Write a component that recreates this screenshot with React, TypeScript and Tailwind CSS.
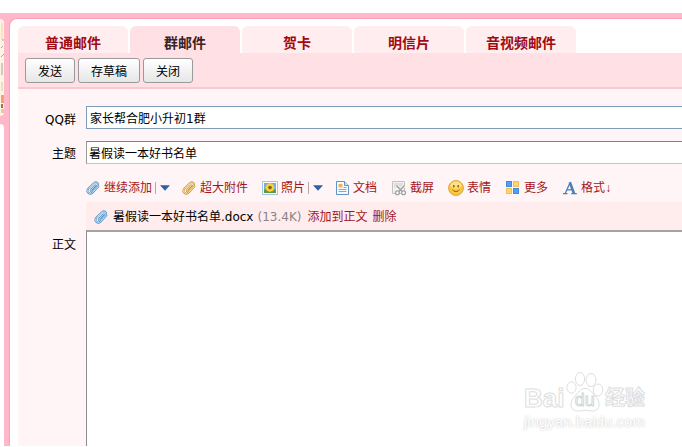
import { useState } from 'react';
import type { ReactNode } from 'react';

const TABS = ['普通邮件', '群邮件', '贺卡', '明信片', '音视频邮件'];
const ACTIONS = ['发送', '存草稿', '关闭'];

// --- Icons ---
function ClipIcon({ stroke, fill, edge }: { stroke: string; fill: string; edge: string }) {
  const d = 'M10.4 5.4 6.2 9.8c-.9 1 .4 2.2 1.3 1.3l4.7-5c2.2-2.4-.9-5.2-3.2-3L3.6 8.5c-3 3.2 1 7 4 4l5.8-6.1';
  return (
    <svg viewBox="0 0 16 16" className="h-4 w-4 shrink-0" fill="none" strokeLinecap="round">
      <path d={d} stroke={edge} strokeWidth="2" />
      <path d={d} stroke={fill} strokeWidth=".9" />
      <path d="M4.6 8.6 9.8 3.4" stroke={stroke} strokeWidth=".5" />
    </svg>
  );
}

const blueClip = <ClipIcon stroke="#eef7ff" fill="#c4e3f7" edge="#5590c2" />;
const goldClip = <ClipIcon stroke="#fff6d8" fill="#fde3a0" edge="#cf9434" />;

const photoIcon = (
  <svg viewBox="0 0 16 16" className="h-4 w-4 shrink-0">
    <rect x=".5" y="1.5" width="15" height="13" fill="#fff" stroke="#a9c6e0" />
    <rect x="2" y="3" width="12" height="10" fill="#74b0d6" />
    <path d="M2 9.5h12V13H2z" fill="#5b9a45" />
    <g fill="#fbd13a">
      <circle cx="8" cy="4.9" r="1.8" />
      <circle cx="8" cy="10.3" r="1.8" />
      <circle cx="5.3" cy="7.6" r="1.8" />
      <circle cx="10.7" cy="7.6" r="1.8" />
      <circle cx="6.1" cy="5.7" r="1.8" />
      <circle cx="9.9" cy="5.7" r="1.8" />
      <circle cx="6.1" cy="9.5" r="1.8" />
      <circle cx="9.9" cy="9.5" r="1.8" />
    </g>
    <circle cx="8" cy="7.6" r="1.8" fill="#8a5a17" />
  </svg>
);

const docIcon = (
  <svg viewBox="0 0 16 16" className="h-4 w-4 shrink-0">
    <path d="M2.5 1.5h8l4 4v9h-12z" fill="#f7fbff" stroke="#5f92c6" />
    <path d="M10.5 1.5v4h4" fill="#cfe3f5" stroke="#5f92c6" />
    <path d="M4.5 4h4v3.5h-4z" fill="#f2b25c" />
    <path d="M9.5 7.5h3M4.5 9.5h8M4.5 11.5h8" stroke="#7fa9d3" />
  </svg>
);

const cutIcon = (
  <svg viewBox="0 0 16 16" className="h-4 w-4 shrink-0" fill="none">
    <path d="M1.5 1.5h12v12h-12z" fill="#f1f1f1" stroke="#c2c2c2" />
    <path d="M3 3h9v5H3z" fill="#dedede" />
    <path d="m5.5 5.5 5.6 6M13.5 5.5l-5.6 6" stroke="#fff" strokeWidth="3" />
    <path d="m5.5 5.5 5.6 6M13.5 5.5l-5.6 6" stroke="#a2a2a2" strokeWidth="1.7" />
    <circle cx="6.4" cy="12.8" r="1.9" fill="#fff" stroke="#a2a2a2" strokeWidth="1.3" />
    <circle cx="12.6" cy="12.8" r="1.9" fill="#fff" stroke="#a2a2a2" strokeWidth="1.3" />
  </svg>
);

const smileIcon = (
  <svg viewBox="0 0 16 16" className="h-4 w-4 shrink-0">
    <circle cx="8" cy="8" r="7.4" fill="#fcc83f" stroke="#d9a13b" />
    <ellipse cx="8" cy="5.2" rx="5.6" ry="3.6" fill="#fde27c" />
    <ellipse cx="5.8" cy="6.3" rx=".8" ry="1.3" fill="#80551a" />
    <ellipse cx="10.2" cy="6.3" rx=".8" ry="1.3" fill="#80551a" />
    <path d="M4.6 9.8c1.6 2.4 5.2 2.4 6.8 0" fill="none" stroke="#95621f" strokeLinecap="round" />
  </svg>
);

const moreIcon = (
  <svg viewBox="0 0 16 16" className="h-4 w-4 shrink-0">
    <rect x="1.5" y="1.5" width="5" height="5" fill="#559cf3" stroke="#4189e4" />
    <rect x="8.5" y="1.5" width="5" height="5" fill="#fcd56c" stroke="#efc05a" />
    <rect x="1.5" y="8.5" width="5" height="5" fill="#fcd56c" stroke="#efc05a" />
    <rect x="8.5" y="8.5" width="5" height="5" fill="#559cf3" stroke="#4189e4" />
  </svg>
);

const formatIcon = (
  <svg viewBox="0 0 16 16" className="h-4 w-4 shrink-0" fill="none" stroke="#4a80b8">
    <path d="m3.2 13.4 4.9-11" strokeWidth="1.3" />
    <path d="m7.8 2.2 4.2 11.2" strokeWidth="2.6" />
    <path d="M5 9.8h5.5" strokeWidth="1.3" />
    <path d="M1 13.7h4.5M9.2 13.7h5.6" strokeWidth="1.2" />
  </svg>
);

type Tool = { label: string; icon: ReactNode; menu?: boolean; down?: boolean };

const TOOLS: Tool[] = [
  { label: '继续添加', icon: blueClip, menu: true },
  { label: '超大附件', icon: goldClip },
  { label: '照片', icon: photoIcon, menu: true },
  { label: '文档', icon: docIcon },
  { label: '截屏', icon: cutIcon },
  { label: '表情', icon: smileIcon },
  { label: '更多', icon: moreIcon },
  { label: '格式', icon: formatIcon, down: true },
];

function ToolItem({ label, icon, menu, down }: Tool) {
  return (
    <div className="flex items-center">
      <button type="button" className="flex items-center gap-[3px] whitespace-nowrap">
        {icon}
        <span>
          {label}
          {down && <span className="font-['Liberation_Sans',sans-serif]">↓</span>}
        </span>
      </button>
      {menu && (
        <button type="button" aria-label={`${label}选项`} className="-mr-[3px] ml-[3px] flex items-center gap-1">
          <span className="h-3 w-px bg-[#b5a5a8]" />
          <svg viewBox="0 0 10 6" className="h-[6px] w-[10px]">
            <path d="M0 .3h10L5 5.7z" fill="#2f5fa5" />
          </svg>
        </button>
      )}
    </div>
  );
}

function Watermark() {
  return (
    <div className="pointer-events-none absolute right-[37px] bottom-[15px] w-[121px] font-['Liberation_Sans','Noto_Sans_CJK_SC',sans-serif] text-white">
      <div className="flex items-end justify-between">
        <span className="text-[26px] leading-7 font-bold [-webkit-text-stroke:1px_#dedede]">Bai</span>
        <span className="relative h-10 w-9">
          <svg viewBox="0 0 36 40" className="h-10 w-9 overflow-visible" fill="#fff" stroke="#dedede">
            <ellipse cx="4.5" cy="15.5" rx="4.6" ry="5.7" />
            <ellipse cx="13" cy="7" rx="4.6" ry="6.5" />
            <ellipse cx="24" cy="8" rx="5" ry="6.5" />
            <ellipse cx="31" cy="18" rx="4.8" ry="6" />
            <path d="M18 16.5c5 0 7 4.5 10 7.5 6 6 5.5 14.5-2 15-4 .2-5-.8-8-.8s-4 1-8 .8c-7.5-.5-8-9-2-15 3-3 5-7.500 10-7.500z" />
          </svg>
          <span className="absolute inset-x-0 bottom-0 text-center text-lg leading-6 [-webkit-text-stroke:1px_#d6d6d6]">du</span>
        </span>
        <span className="text-[20px] leading-7 font-bold [-webkit-text-stroke:1px_#dedede]">经验</span>
      </div>
      <p className="text-[15px] leading-5 [text-shadow:0_0_2px_#bbbbbb]">jingyan.baidu.com</p>
    </div>
  );
}

// Edge of the neighbouring sidebar, with its illustration cut off
function SidebarEdge() {
  return (
    <div className="flex w-1 shrink-0 flex-col gap-2 overflow-hidden pt-[6px]">
      <svg viewBox="0 0 4 97" className="h-[97px] w-1 shrink-0 rounded-r-sm" preserveAspectRatio="none">
        <rect width="4" height="97" fill="#fdf3e4" />
        <path d="M1 4h2v17H1z" fill="#fbe3bd" />
        <path d="M2 21h2M1 29l2-2M1 38l3-3M2 44v10M3 55H1" stroke="#a7a49a" />
        <path d="M1 63h2v9H1z" fill="#dfe6bd" />
        <path d="M1 76h3v8H1z" fill="#f0a273" />
        <path d="M1 85h2v4H1z" fill="#8f7c4f" />
        <path d="M1 90h3v4H1z" fill="#f3c49c" />
      </svg>
      <div className="flex-1 rounded-tr-sm bg-white" />
    </div>
  );
}

export default function App() {
  const [tab, setTab] = useState('群邮件');
  const [group, setGroup] = useState('家长帮合肥小升初1群');
  const [subject, setSubject] = useState('暑假读一本好书名单');

  return (
    <div className="relative flex min-h-screen flex-col overflow-hidden bg-white pt-[13px] pb-px font-['DejaVu_Sans','Noto_Sans_CJK_SC',sans-serif] text-xs text-black">
      <div className="flex flex-1 bg-[#ffb7ca]">
        <SidebarEdge />
        <div className="mt-[5px] ml-[5px] flex min-w-0 flex-1 flex-col rounded-tl-lg border-t border-l border-[#f9a3bb] bg-white pt-[7px] pl-2">
          {/* Mail type tabs */}
          <div role="tablist" className="flex gap-[2px]">
            {TABS.map((t) => (
              <button
                key={t}
                type="button"
                role="tab"
                aria-selected={t === tab}
                onClick={() => setTab(t)}
                className={`h-[27px] w-[110px] rounded-t-md pt-2 text-sm leading-[19px] font-bold ${
                  t === tab ? 'bg-[#ffe0e4] text-[#3a2222]' : 'bg-[#ffedef] text-[#a00a10]'
                }`}
              >
                {t}
              </button>
            ))}
          </div>

          {/* Actions */}
          <div className="flex gap-[3px] border-b-2 border-[#fac8d2] bg-[#ffe0e4] px-[7px] pt-[5px] pb-1">
            {ACTIONS.map((a) => (
              <button
                key={a}
                type="button"
                className="h-[25px] rounded-[3px] border border-[#9a9a9a] bg-linear-to-b from-white to-[#e6e6e6] px-3 pt-[2px] leading-5"
              >
                {a}
              </button>
            ))}
          </div>

          {/* Compose form */}
          <form className="flex flex-1 flex-col bg-[#fff5f6] pt-[17px]">
            <div className="mb-3 flex items-center">
              <label htmlFor="group" className="w-[68px] pt-1 pr-[10px] text-right">QQ群</label>
              <input
                id="group"
                value={group}
                onChange={(e) => setGroup(e.target.value)}
                className="h-[23px] min-w-0 flex-1 border border-r-0 border-[#7f9db9] bg-white px-[3px] outline-none"
              />
            </div>
            <div className="mb-[14px] flex items-center">
              <label htmlFor="subject" className="w-[68px] pt-[2px] pr-[10px] text-right">主题</label>
              <input
                id="subject"
                value={subject}
                onChange={(e) => setSubject(e.target.value)}
                className="h-[23px] min-w-0 flex-1 border border-r-0 border-t-[#808080] border-b-[#c4c4c4] border-l-[#9a9a9a] bg-white px-[2px] outline-none"
              />
            </div>

            <div className="mb-1 flex h-5 items-center gap-[14px] pl-[67px] text-[#a3151b]">
              {TOOLS.map((t) => (
                <ToolItem key={t.label} {...t} />
              ))}
            </div>

            <div className="ml-[68px] flex h-7 items-center gap-1 bg-[#ffedee] pt-[2px] pl-[7px] whitespace-nowrap">
              {blueClip}
              <span>暑假读一本好书名单.docx</span>
              <span className="text-[#8b8285]">(13.4K)</span>
              <span className="flex gap-[5px] pl-[2px] text-[#a3151b]">
                <a href="#add">添加到正文</a>
                <a href="#remove">删除</a>
              </span>
            </div>

            <div className="flex flex-1">
              <label htmlFor="body" className="w-[68px] pt-[7px] pr-[10px] text-right">正文</label>
              <textarea
                id="body"
                className="min-h-52 min-w-0 flex-1 resize-none border-t-2 border-l border-t-[#a3a3a3] border-l-[#8c8c8c] bg-white p-2 outline-none"
              />
            </div>
          </form>
        </div>
      </div>
      <Watermark />
    </div>
  );
}
